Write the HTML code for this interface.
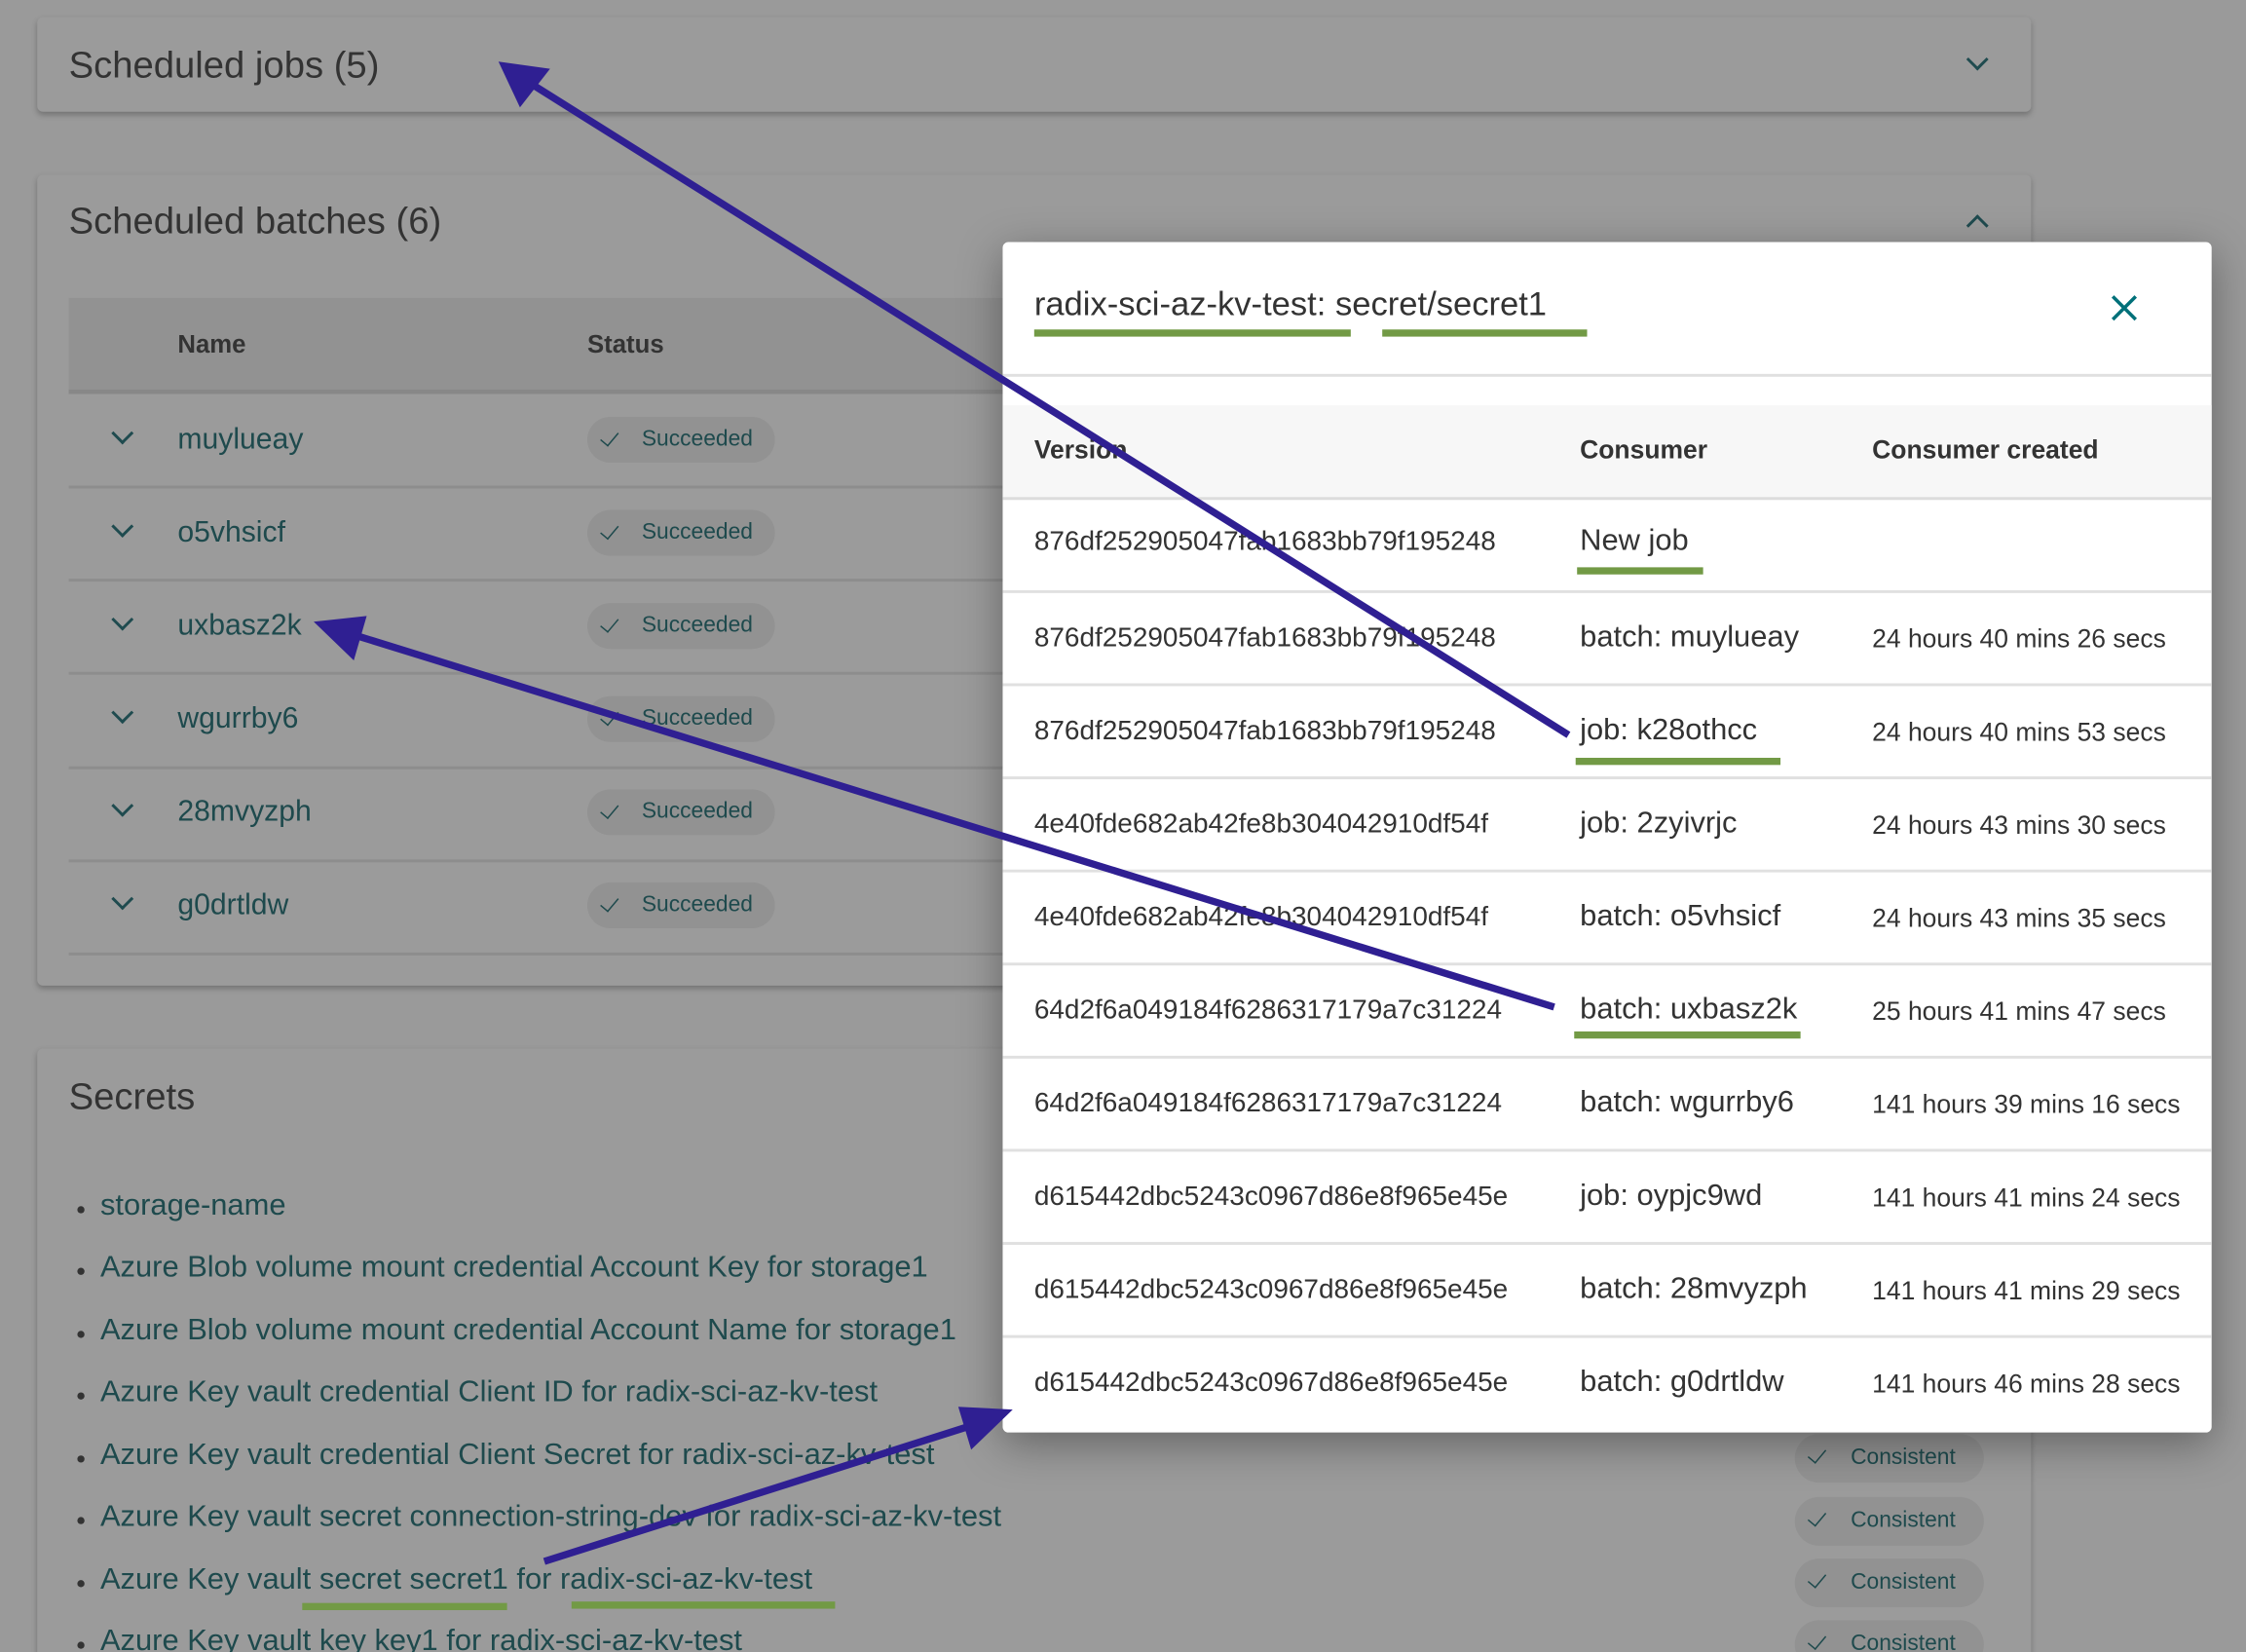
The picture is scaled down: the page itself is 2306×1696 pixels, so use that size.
<!DOCTYPE html>
<html><head><meta charset="utf-8"><style>
html,body{margin:0;padding:0;background:#9a9a9a;overflow:hidden}
body{width:2306px;height:1696px;position:relative}
#w{position:absolute;left:0;top:0;width:1568px;height:1153px;transform:scale(1.470663);transform-origin:0 0;font-family:"Liberation Sans",sans-serif;color:#3d3d3d}
.card{position:absolute;left:26px;width:1392px;background:#9b9b9b;border-radius:4px;box-shadow:0 2px 4px rgba(0,0,0,.25)}
.t{position:absolute;font-size:26px;color:#333}
.abs{position:absolute}
.chev{position:absolute;width:9px;height:9px;border-right:2.2px solid #1f4b4f;border-bottom:2.2px solid #1f4b4f;transform:rotate(45deg)}
.chevup{transform:rotate(-135deg)}
.link{color:#1e4a4d;font-size:20.5px;position:absolute}
.pill{position:absolute;left:410px;width:131px;height:32px;border-radius:16px;background:#929292;font-size:15.5px;color:#1e4a4d;line-height:32px}
.pill span{position:absolute;left:38px}
.ck{position:absolute;left:12px;top:8px;width:6px;height:11px;border-right:1.8px solid #1e4a4d;border-bottom:1.8px solid #1e4a4d;transform:rotate(40deg)}
.sep{position:absolute;left:48px;width:660px;height:2px;background:#8d8d8d}
.modal{position:absolute;left:700px;top:169px;width:844px;height:831px;background:#fff;border-radius:4px;box-shadow:0 8px 30px rgba(0,0,0,.35)}
.g{position:absolute;background:#729a45;height:5px}
.row{position:absolute;left:0;width:844px;height:65px;border-top:2px solid #e0e0e0;font-size:19px;color:#333}
.row div{position:absolute;top:21px}
.c1{left:22px}.c2{left:403px;font-size:21px;top:19px!important}.c3{left:607px;font-size:18px;top:22px!important}
.li{position:absolute;left:56px;font-size:21px;color:#1e4a4d}
.li:before{content:"";position:absolute;left:-2px;top:12px;width:5px;height:5px;border-radius:50%;background:#333}
.li span{margin-left:14px}
.cp{position:absolute;left:1253px;width:132px;height:34px;border-radius:17px;background:#929292;font-size:15.5px;color:#1e4a4d;line-height:34px}
.cp span{position:absolute;left:39px}
</style></head><body><div id="w">

<div class="card" style="top:12px;height:66px">
  <div class="t" style="left:22px;top:18px">Scheduled jobs (5)</div>
  <div class="chev" style="left:1349px;top:24px"></div>
</div>

<div class="card" style="top:122px;height:566px">
  <div class="t" style="left:22px;top:17px">Scheduled batches (6)</div>
  <div class="chev chevup" style="left:1349px;top:30px"></div>
</div>
<div class="abs" style="left:48px;top:208px;width:660px;height:64px;background:#929292;border-bottom:3px solid #888"></div>
<div class="abs" style="left:124px;top:230px;font-size:17.5px;font-weight:bold;color:#333">Name</div>
<div class="abs" style="left:410px;top:230px;font-size:17.5px;font-weight:bold;color:#333">Status</div>

<div class="chev" style="left:80px;top:297px"></div><div class="link" style="left:124px;top:295px">muylueay</div><div class="pill" style="top:291px"><i class="ck"></i><span>Succeeded</span></div>
<div class="sep" style="top:339px"></div>
<div class="chev" style="left:80px;top:362px"></div><div class="link" style="left:124px;top:360px">o5vhsicf</div><div class="pill" style="top:356px"><i class="ck"></i><span>Succeeded</span></div>
<div class="sep" style="top:404px"></div>
<div class="chev" style="left:80px;top:427px"></div><div class="link" style="left:124px;top:425px">uxbasz2k</div><div class="pill" style="top:421px"><i class="ck"></i><span>Succeeded</span></div>
<div class="sep" style="top:469px"></div>
<div class="chev" style="left:80px;top:492px"></div><div class="link" style="left:124px;top:490px">wgurrby6</div><div class="pill" style="top:486px"><i class="ck"></i><span>Succeeded</span></div>
<div class="sep" style="top:535px"></div>
<div class="chev" style="left:80px;top:557px"></div><div class="link" style="left:124px;top:555px">28mvyzph</div><div class="pill" style="top:551px"><i class="ck"></i><span>Succeeded</span></div>
<div class="sep" style="top:600px"></div>
<div class="chev" style="left:80px;top:622px"></div><div class="link" style="left:124px;top:620px">g0drtldw</div><div class="pill" style="top:616px"><i class="ck"></i><span>Succeeded</span></div>
<div class="sep" style="top:665px"></div>

<div class="card" style="top:732px;height:460px">
  <div class="t" style="left:22px;top:18px">Secrets</div>
</div>
<div class="li" style="top:830px"><span>storage-name</span></div>
<div class="li" style="top:873px"><span>Azure Blob volume mount credential Account Key for storage1</span></div>
<div class="li" style="top:917px"><span>Azure Blob volume mount credential Account Name for storage1</span></div>
<div class="li" style="top:960px"><span>Azure Key vault credential Client ID for radix-sci-az-kv-test</span></div>
<div class="li" style="top:1004px"><span>Azure Key vault credential Client Secret for radix-sci-az-kv-test</span></div>
<div class="li" style="top:1047px"><span>Azure Key vault secret connection-string-dev for radix-sci-az-kv-test</span></div>
<div class="li" style="top:1091px"><span>Azure Key vault secret secret1 for radix-sci-az-kv-test</span></div>
<div class="li" style="top:1134px"><span>Azure Key vault key key1 for radix-sci-az-kv-test</span></div>
<div class="cp" style="top:1001px"><i class="ck"></i><span>Consistent</span></div>
<div class="cp" style="top:1045px"><i class="ck"></i><span>Consistent</span></div>
<div class="cp" style="top:1088px"><i class="ck"></i><span>Consistent</span></div>
<div class="cp" style="top:1131px"><i class="ck"></i><span>Consistent</span></div>
<div class="g" style="left:211px;top:1119px;width:143px"></div>
<div class="g" style="left:399px;top:1118px;width:184px"></div>

<div class="modal">
  <div class="abs" style="left:22px;top:30px;font-size:23.5px;color:#333">radix-sci-az-kv-test: secret/secret1</div>
  <div class="g" style="left:22px;top:61px;width:221px"></div>
  <div class="g" style="left:265px;top:61px;width:143px"></div>
  <svg class="abs" style="left:772px;top:35px" width="22" height="22" viewBox="0 0 22 22"><path d="M3 3L19 19M19 3L3 19" stroke="#007079" stroke-width="2.4" fill="none"/></svg>
  <div class="abs" style="left:0;top:92px;width:844px;height:2px;background:#e0e0e0"></div>
  <div class="abs" style="left:0;top:114px;width:844px;height:64px;background:#f7f7f7;border-bottom:2px solid #dcdcdc;font-size:18px;font-weight:bold;color:#333">
    <div class="abs" style="left:22px;top:21px">Version</div>
    <div class="abs" style="left:403px;top:21px">Consumer</div>
    <div class="abs" style="left:607px;top:21px">Consumer created</div>
  </div>
  <div class="row" style="top:178px;border-top:none"><div class="c1">876df252905047fab1683bb79f195248</div><div class="c2">New job</div></div>
  <div class="row" style="top:243px"><div class="c1">876df252905047fab1683bb79f195248</div><div class="c2">batch: muylueay</div><div class="c3">24 hours 40 mins 26 secs</div></div>
  <div class="row" style="top:308px"><div class="c1">876df252905047fab1683bb79f195248</div><div class="c2">job: k28othcc</div><div class="c3">24 hours 40 mins 53 secs</div></div>
  <div class="row" style="top:373px"><div class="c1">4e40fde682ab42fe8b304042910df54f</div><div class="c2">job: 2zyivrjc</div><div class="c3">24 hours 43 mins 30 secs</div></div>
  <div class="row" style="top:438px"><div class="c1">4e40fde682ab42fe8b304042910df54f</div><div class="c2">batch: o5vhsicf</div><div class="c3">24 hours 43 mins 35 secs</div></div>
  <div class="row" style="top:503px"><div class="c1">64d2f6a049184f6286317179a7c31224</div><div class="c2">batch: uxbasz2k</div><div class="c3">25 hours 41 mins 47 secs</div></div>
  <div class="row" style="top:568px"><div class="c1">64d2f6a049184f6286317179a7c31224</div><div class="c2">batch: wgurrby6</div><div class="c3">141 hours 39 mins 16 secs</div></div>
  <div class="row" style="top:633px"><div class="c1">d615442dbc5243c0967d86e8f965e45e</div><div class="c2">job: oypjc9wd</div><div class="c3">141 hours 41 mins 24 secs</div></div>
  <div class="row" style="top:698px"><div class="c1">d615442dbc5243c0967d86e8f965e45e</div><div class="c2">batch: 28mvyzph</div><div class="c3">141 hours 41 mins 29 secs</div></div>
  <div class="row" style="top:763px"><div class="c1">d615442dbc5243c0967d86e8f965e45e</div><div class="c2">batch: g0drtldw</div><div class="c3">141 hours 46 mins 28 secs</div></div>
  <div class="g" style="left:401px;top:227px;width:88px"></div>
  <div class="g" style="left:400px;top:360px;width:143px"></div>
  <div class="g" style="left:399px;top:551px;width:158px"></div>
</div>

<svg class="abs" style="left:0;top:0" width="1568" height="1153" viewBox="0 0 1568 1153">
  <g stroke="#2f1f92" stroke-width="5" fill="#2f1f92">
    <line x1="1095" y1="513" x2="370" y2="58"/>
    <line x1="1085" y1="703" x2="240" y2="441"/>
    <line x1="380" y1="1090" x2="685" y2="993"/>
  </g>
  <g fill="#2f1f92">
    <polygon points="348,43 384,48 363,75"/>
    <polygon points="219,434 256,430 247,461"/>
    <polygon points="707,984 669,982 678,1012"/>
  </g>
</svg>
</div></body></html>
